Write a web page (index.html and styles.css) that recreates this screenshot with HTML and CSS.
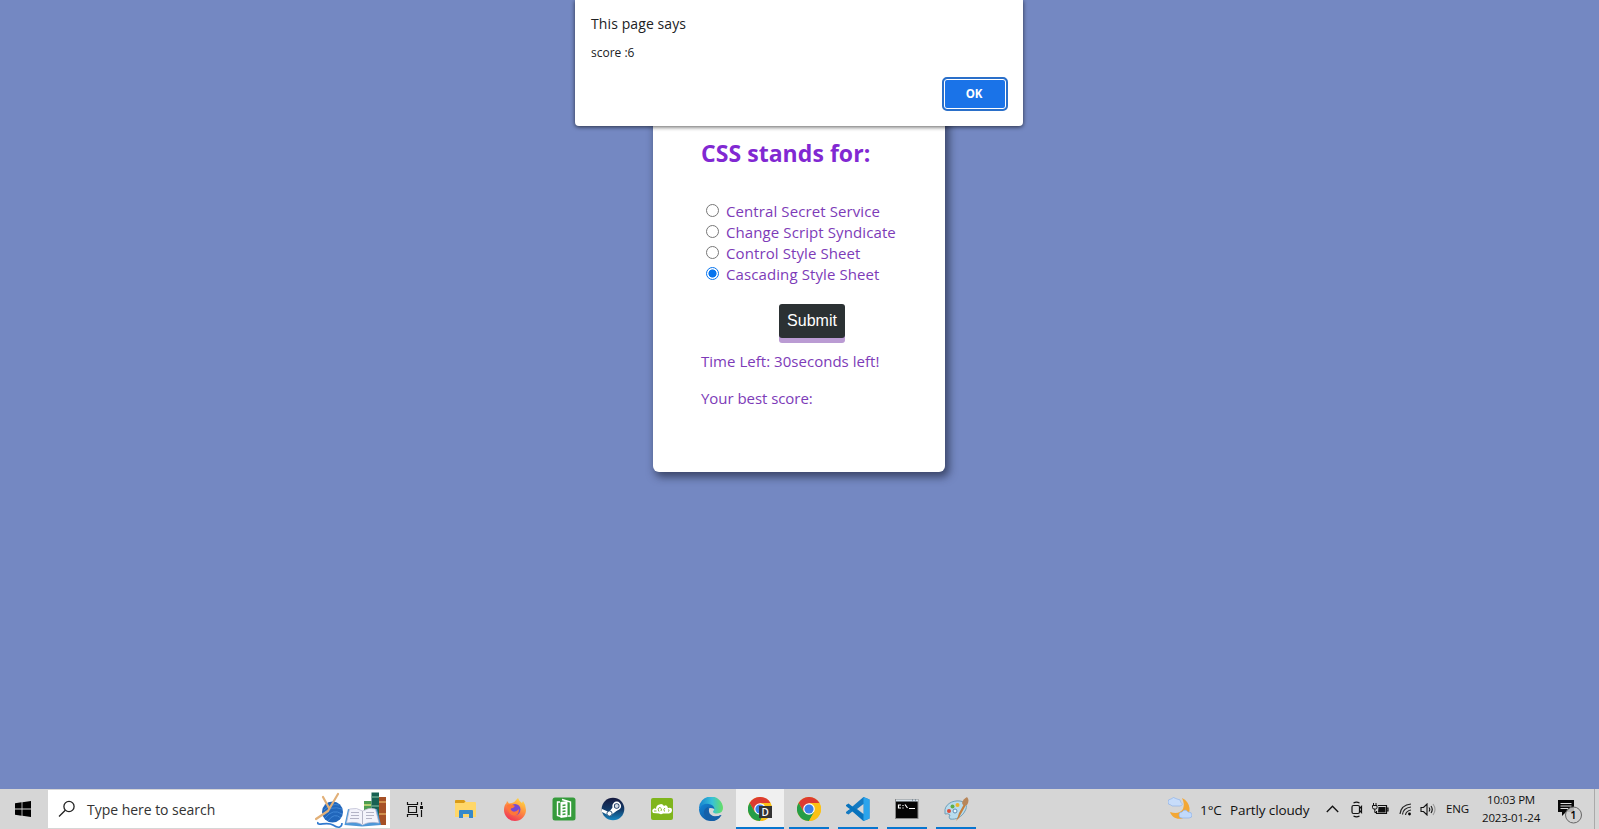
FILE: index.html
```html
<!DOCTYPE html>
<html lang="en">
<head>
<meta charset="utf-8">
<title>Quiz</title>
<link rel="stylesheet" href="styles.css">
</head>
<body>
<main class="page">
  <section class="card">
    <h2 class="question">CSS stands for:</h2>
    <div class="answers">
      <label class="answer"><span class="radio"></span><span>Central Secret Service</span></label>
      <label class="answer"><span class="radio"></span><span>Change Script Syndicate</span></label>
      <label class="answer"><span class="radio"></span><span>Control Style Sheet</span></label>
      <label class="answer"><span class="radio checked"></span><span>Cascading Style Sheet</span></label>
    </div>
    <button class="submit">Submit</button>
    <p class="line time-left">Time Left: 30seconds left!</p>
    <p class="line best">Your best score:</p>
  </section>
</main>

<div class="dialog">
  <div class="dialog-title"><span>This page says</span></div>
  <div class="dialog-text"><span>score :6</span></div>
  <button class="ok">OK</button>
</div>

<footer class="taskbar">
  <div class="start">
    <svg width="16" height="16" viewBox="0 0 16 16"><path d="M0 2.3 6.6 1.3V7.5H0ZM7.4 1.2 16 0V7.5H7.4ZM0 8.4H6.6V14.7L0 13.7ZM7.4 8.4H16V16L7.4 14.8Z"/></svg>
  </div>
  <div class="search">
    <svg class="lens" width="18" height="18" viewBox="0 0 18 18" fill="none" stroke="#222" stroke-width="1.3"><circle cx="11" cy="6.5" r="5.1"/><path d="M7.3 10.3 1 16.5"/></svg>
    <span class="search-text">Type here to search</span>
    <svg class="doodle" width="74" height="37" viewBox="0 0 74 37">
      <path d="M3 31C1 36 12 30 18 34S27 36 27 32" fill="none" stroke="#2f79cf" stroke-width="1.6"/>
      <circle cx="17.5" cy="21" r="10.500" fill="#2166bb"/>
      <path d="M9 19Q16 12 24 14M8 23Q16 14 27 18M10 27Q18 17 27 23M13 30Q19 21 26 27" fill="none" stroke="#3f86d6" stroke-width="1"/>
      <path d="M1 28 13 20M8 6 14 17M23 3 13 20" stroke="#e2b078" stroke-width="2.2" stroke-linecap="round"/>
      <rect x="49" y="10" width="7.500" height="14" fill="#4d9d50"/><path d="M49 14h7.500" stroke="#b5cf72" stroke-width="2"/>
      <rect x="56.500" y="1.500" width="7.500" height="25" fill="#176052"/><path d="M56.500 6h7.500M56.500 15h7.500" stroke="#66a48a" stroke-width="1.500"/>
      <rect x="64" y="6" width="7" height="28" fill="#a65026"/><path d="M64 11h7M64 23h7" stroke="#dea45b" stroke-width="1.500"/>
      <path d="M33 18 29.500 34 47 35.500 66 34 62 18 47 21Z" fill="#4d97d8"/>
      <path d="M34.500 18Q42 16 47.500 20Q54 16 60.500 18L64 32Q54 30 47.500 34Q42 30 31.500 32Z" fill="#f3f3fb" stroke="#b7b7cf" stroke-width=".7"/>
      <path d="M47.500 20V33M36 21.500h8M36 24.500h8M35 27.500h9M51 21.500h8M51 24.500h8M51 27.500h6" stroke="#b4b4c6"/>
    </svg>
  </div>
  <div class="task-view">
    <svg width="17" height="17" viewBox="0 0 17 17" fill="none" stroke="#111" stroke-width="1.200"><path d="M1.500 1V3.500H11.500V1M1.500 16V13.500H11.500V16M2.500 5.500H10.500V11.500H2.500ZM15.500 1V4M15.500 9V16"/><rect x="14" y="5" width="3" height="3" fill="#111" stroke="none"/></svg>
  </div>
  <div class="apps">
    <div class="app"><svg width="22" height="20" viewBox="0 0 22 20"><path d="M0 2a1 1 0 0 1 1-1H9L11 3H20a1 1 0 0 1 1 1V18H0Z" fill="#ffd769"/><path d="M0 1.500 1 1H9L10.500 2.500 9 4H0Z" fill="#d99b18"/><path d="M4 19V12a1 1 0 0 1 1-1H17a1 1 0 0 1 1 1V19H14V15H8V19Z" fill="#3689ca"/></svg></div>
    <div class="app"><svg width="24" height="24" viewBox="0 0 24 24"><defs><linearGradient id="ff" x1=".8" y1="0" x2=".3" y2="1"><stop offset="0" stop-color="#ffdf42"/><stop offset=".45" stop-color="#ff9340"/><stop offset="1" stop-color="#ef3158"/></linearGradient></defs><path d="M4 4 6 6.500 9 6Q12 5 14 2L15 1Q16 4 19 6L20 4Q23 8 23 13A11 11 0 0 1 1 13Q1 8 3.500 6Z" fill="url(#ff)"/><circle cx="12" cy="12.500" r="5.500" fill="#7549d5"/><path d="M4 8Q8 6 12 9L10 11Q7 11 8 13Q11 17 16 12Q16 18 11 18.500Q5 18 4 8Z" fill="#ff7639"/></svg></div>
    <div class="app"><svg width="24" height="24" viewBox="0 0 24 24"><rect x=".5" y=".5" width="23" height="23" rx="2.500" fill="#369b3c"/><path d="M8 5H5.500V18.500L9 19.500M16 19H18.500V5L10 2.500" fill="none" stroke="#fff" stroke-width="1.400"/><path d="M8.500 5 15.500 4V20L8.500 21Z" fill="#fff"/><path d="M10.500 8.500 13.500 8M10.500 11.500 13.500 11M10.500 14.500 13.500 14M10.500 17.500 13.500 17" stroke="#369b3c" stroke-width="1.300"/></svg></div>
    <div class="app"><svg width="24" height="24" viewBox="0 0 24 24"><defs><linearGradient id="st" x2="0" y2="1"><stop stop-color="#15183d"/><stop offset=".55" stop-color="#123d6b"/><stop offset="1" stop-color="#1687c3"/></linearGradient></defs><circle cx="12" cy="12" r="11.300" fill="url(#st)"/><path d="M1 12 8 15 12 10 18 12 9 19 1 15Z" fill="#fff"/><circle cx="15.700" cy="9" r="3.600" fill="#183762" stroke="#fff" stroke-width="1.600"/><circle cx="15.700" cy="9" r="2" fill="#d5dce6"/><circle cx="8.500" cy="16.500" r="2.600" fill="#fff" stroke="#31587b"/></svg></div>
    <div class="app"><svg width="24" height="24" viewBox="0 0 24 24"><rect x="1" y="1" width="22" height="22" rx="2" fill="#7fb51c"/><path d="M3 16Q1 13 4 11.500Q5 11 6 12Q6 8 9.500 7.500Q12 6 14 9Q17 7 18 11Q22 10 22 13Q22 16 19 16.500H13Q11 18 9 16.500Z" fill="#fff"/><path d="M9 14.500Q7 11 10 10.500Q12.500 11.500 11 14M18 14.500Q20 13.500 18.500 12.500M4 14H6.500M14.500 14.500Q13 12 15 11" fill="none" stroke="#7fb51c" stroke-width=".9"/></svg></div>
    <div class="app"><svg width="24" height="24" viewBox="0 0 24 24"><defs><linearGradient id="eg"><stop stop-color="#1683cf"/><stop offset=".55" stop-color="#37c1d8"/><stop offset="1" stop-color="#67df63"/></linearGradient><linearGradient id="eb" x2="1" y2="1"><stop stop-color="#1184d5"/><stop offset="1" stop-color="#114a90"/></linearGradient></defs><path d="M0 12A12 12 0 0 1 24 11Q24 16 18 16.500Q14 16.500 14 14.500Q17 11 12 8.500Q5 5 0 12Z" fill="url(#eg)"/><path d="M0 12Q3 6 10 7Q15 8 15.500 12Q9 9 9 14Q10 21 18 19.500L22.500 18Q18 24 12 24A12 12 0 0 1 0 12Z" fill="url(#eb)"/><path d="M9 10Q4 12 5 17Q7 23 13 24Q19 24 22.500 18Q18 20 14 19Q9 17 10 12Z" fill="#1460a9"/></svg></div>
    <div class="app running active"><svg width="24" height="24" viewBox="0 0 24 24"><g id="chrome"><circle cx="12" cy="12" r="12" fill="#fbc116"/><path d="M1.600 6A12 12 0 0 1 22.400 6H12L6.800 15Z" fill="#dd3b30"/><path d="M1.600 6A12 12 0 0 0 12 24L17.200 15H6.800Z" fill="#259d47"/><path d="M12 6H22.400A12 12 0 0 1 12 24L17.200 15Z" fill="#fbc116"/><circle cx="12" cy="12" r="5.800" fill="#fff"/><circle cx="12" cy="12" r="4.600" fill="#3b7fe8"/></g></svg><span class="profile">D</span></div>
    <div class="app running"><svg width="24" height="24" viewBox="0 0 24 24"><use href="#chrome"/></svg></div>
    <div class="app running"><svg width="24" height="24" viewBox="0 0 24 24"><path d="M17.500 0 23.500 2.500V21.500L17.500 24 7 14 2.500 17.500 0 16.200V15L17.500 0Z" fill="#147ac2"/><path d="M0 8 2.500 6.500 17.500 18V24L0 9Z" fill="#0873bd"/><path d="M17.500 0 23.500 2.500V21.500L17.500 24Z" fill="#2ba4ec"/><path d="M17.500 7V17L11 12Z" fill="#d6d6d6"/><path d="M0 10.500 4 12 0 14Z" fill="#d6d6d6"/></svg></div>
    <div class="app running"><svg width="24" height="20" viewBox="0 0 24 20"><rect x=".5" y=".5" width="22.500" height="19" fill="#050505" stroke="#888"/><path d="M1 1.500H23" stroke="#d7e2eb" stroke-width="2"/><path d="M17 1h1M20 1h1" stroke="#567"/><path d="M6 6H3.500V9H6M8 6V7M8 8.500V9.500M10 5.500 12.500 9M14 9.500H20" stroke="#fff" fill="none" stroke-width="1.200"/></svg></div>
    <div class="app running"><svg width="25" height="24" viewBox="0 0 25 24"><path d="M1 15C0 8 8 3 16 4C22 5 24 9 21 14C18 20 12 23 6 22Q4 20 6 18Q4 16 1 17Z" fill="#b9dced" stroke="#719fb8"/><circle cx="5" cy="14" r="2" fill="#dc4c38"/><circle cx="8.500" cy="9.500" r="2" fill="#5fae44"/><circle cx="13.500" cy="8" r="2" fill="#eab52b"/><circle cx="11" cy="14" r="2" fill="#e9f6fb" stroke="#5e8fb7"/><path d="M12 24Q14 20 15 16L20 7 22 8 17 17Q15 22 12 24Z" fill="#c4803e"/><path d="M18 6Q19 2 23 0Q26 3 23 8L19 8Z" fill="#b88659"/></svg></div>
  </div>
  <div class="tray">
    <svg class="weather" width="24" height="24" viewBox="0 0 24 24"><path d="M14 1C23 5 24 17 17 20C11 24 4 21 2 15Q11 18 15 12Q17 7 14 1Z" fill="#f3a735"/><path d="M3 8a3 3 0 0 1 0-6Q5-1 9 2Q13 2 13 5.500Q16 8 12 9H4Z" fill="#c7dcfa" stroke="#91b3e6" stroke-width=".7"/><path d="M14 21a3 3 0 0 1 0-6Q17 11 20 15Q24 15 24 18Q24 21 21 21Z" fill="#c1d9fb" stroke="#91b3e6" stroke-width=".7"/></svg>
    <span class="temp">1°C</span>
    <span class="sky">Partly cloudy</span>
    <svg class="chev" width="13" height="8" viewBox="0 0 13 8"><path d="M.8 7 6.500 1.200 12.200 7" fill="none" stroke="#111" stroke-width="1.300"/></svg>
    <svg class="meet" width="13" height="17" viewBox="0 0 13 17" fill="none" stroke="#111" stroke-width="1.200"><rect x="1" y="4.500" width="7.500" height="8" rx="1.500"/><path d="M8.500 7.500 10.500 5.500V11.500L8.500 9.500M2.500 2Q5.500 .3 8.500 2M2.500 15Q5.500 16.700 8.500 15"/></svg>
    <svg class="battery" width="17" height="12" viewBox="0 0 17 12"><path d="M6 2.500H14.500V10.500H4.500V8M14.500 5H16V8H14.500" fill="none" stroke="#111" stroke-width="1.200"/><path d="M6.500 4H13.500V9.500H6Z" fill="#111"/><path d="M1.500 0V2.500M4 0V2.500M.5 2.500H5V4.500Q5 6 3.500 6H2Q.5 6 .5 4.500ZM2.800 6V9.500H5" fill="none" stroke="#111"/></svg>
    <svg class="wifi" width="13" height="13" viewBox="0 0 13 13"><path d="M1 11Q2 2 12 1M3.500 11.500Q4 5 12 4M6.500 12Q7 8 12 7" fill="none" stroke="#222" stroke-width="1.200"/><circle cx="10.500" cy="11" r="1.400"/></svg>
    <svg class="volume" width="17" height="13" viewBox="0 0 17 13" fill="none" stroke="#111" stroke-width="1.100"><path d="M1 4.500H3.500L7 1V12L3.500 8.500H1ZM9 4.500Q10.500 6.500 9 8.500M11 3Q13.500 6.500 11 10"/><path d="M13 1Q17 6.500 13 12" stroke="#999"/></svg>
    <span class="lang">ENG</span>
    <div class="clock"><span class="time">10:03 PM</span><span class="date">2023-01-24</span></div>
    <svg class="notify" width="26" height="26" viewBox="0 0 26 26"><path d="M1 2H17V14H9L5 18V14H1Z" fill="#080808"/><path d="M3.500 5.500H14.500M3.500 8H14.500M3.500 10.500H11" stroke="#ddd"/><circle cx="16.500" cy="17" r="8" fill="#d0d0d0" fill-opacity=".85" stroke="#666" stroke-width="1"/><text class="badge" x="16.500" y="21" text-anchor="middle">1</text></svg>
  </div>
</footer>
</body>
</html>
```
FILE: styles.css
```css
* { box-sizing: border-box; }
body {
  margin: 0; width: 1599px; height: 829px; overflow: hidden;
  display: flex; flex-direction: column; position: relative;
  background: #7488c2;
  font-family: "Open Sans", "Noto Sans", sans-serif;
}
svg { display: block; flex: none; }
span { white-space: nowrap; }
.page { flex: 1; display: flex; flex-direction: column; align-items: center; padding: 90px 1px 0 0; }
.card {
  width: 292px; height: 382px; padding: 48px 0 0 48px;
  display: flex; flex-direction: column; align-items: flex-start;
  border-radius: 6px; background: #fff; color: #7d3bb8;
  box-shadow: 3px 4px 9px 1px rgba(20, 25, 45, .6);
}
.question { margin: 0; height: 31px; line-height: 31px; font-size: 23px; font-weight: 700; letter-spacing: .05px; color: #8128d2; white-space: nowrap; }
.answers { margin: 32px 0 0 5px; display: flex; flex-direction: column; }
.answer { height: 21px; line-height: 20px; display: flex; gap: 7px; font-size: 15px; letter-spacing: .1px; }
.radio { width: 13px; height: 13px; margin-top: 3px; flex: none; border: 1px solid #777; border-radius: 50%; background: #fff; }
.checked { border-color: #0875ee; background: radial-gradient(circle, #0875ee 0 3.7px, #fff 4.4px); }
.submit {
  width: 66px; height: 34px; margin: 19px 0 0 78px; padding: 0;
  border: 0; border-radius: 3px; background: #2b3133; color: #fff;
  box-shadow: 0 5px 0 #ba9bd3; font: 16px "Liberation Sans", sans-serif;
}
.line { margin: 0; height: 21px; line-height: 20px; font-size: 15px; letter-spacing: .03px; white-space: nowrap; }
.time-left { margin-top: 13px; }
.best { margin-top: 16px; letter-spacing: -.05px; }

.dialog {
  position: absolute; left: 575px; top: 0; width: 448px; height: 126px;
  padding: 13px 15px 0 16px; display: flex; flex-direction: column;
  background: #fff; border-radius: 0 0 4px 4px; color: #202124;
  box-shadow: 0 1px 4px rgba(0, 0, 0, .65);
}
.dialog-title { height: 22px; line-height: 22px; font-size: 14px; letter-spacing: .1px; }
.dialog-text { margin-top: 9px; height: 18px; line-height: 18px; font-size: 12px; letter-spacing: 0; }
.ok {
  align-self: flex-end; margin-top: 15px; width: 66px; height: 34px; padding: 0 2px 1px 0;
  border: 2px solid #2a6fc9; border-radius: 5px; background: #1a73e8; color: #fff;
  box-shadow: inset 0 0 0 1px #fff; font: 700 11.500px "Open Sans", sans-serif; letter-spacing: -.2px;
}

.taskbar { height: 40px; display: flex; background: #d6d6d6; color: #111; }
.start { width: 48px; display: flex; align-items: center; padding-left: 15px; }
.search { width: 342px; height: 38px; margin-top: 1px; padding-left: 10px; display: flex; align-items: center; background: #fff; }
.lens { margin-top: -1px; }
.search-text { width: 128px; margin-left: 11px; font-size: 14px; letter-spacing: -.03px; color: #333; }
.doodle { margin-left: 100px; }
.task-view { width: 51px; display: flex; align-items: center; padding-left: 16px; }
.apps { display: grid; grid-template-columns: repeat(11, 49.1px); }
.app { position: relative; display: flex; align-items: center; justify-content: center; height: 40px; }
.running::after { content: ""; position: absolute; left: 4px; right: 5px; bottom: 0; height: 2px; background: #0876cf; }
.active { background: #f0f0f0; width: 48px; }
.active::after { left: 0; right: 0; }
.profile { position: absolute; left: 23px; top: 17px; width: 13px; height: 12px; line-height: 12px; text-align: center; background: #333; color: #fff; font-size: 10px; font-weight: 600; }
.tray { flex: 1; display: flex; align-items: center; padding-left: 187px; background: linear-gradient(#aaa, #aaa) no-repeat right 4px top 0 / 1px 100%; }
.temp, .sky { font-size: 13.500px; letter-spacing: -.12px; padding-top: 2px; }
.temp { width: 21px; margin-left: 8px; }
.sky { width: 79px; margin-left: 9px; }
.chev { margin-left: 17px; }
.meet { margin-left: 12px; }
.battery { margin-left: 8px; margin-top: -1px; }
.wifi { margin-left: 10px; margin-top: 1px; }
.volume { margin-left: 8px; }
.lang { width: 24px; margin-left: 9px; margin-top: -1px; font-size: 11.500px; letter-spacing: -.15px; }
.clock { width: 60px; margin-left: 11px; display: flex; flex-direction: column; align-items: center; font-size: 11.500px; line-height: 18px; letter-spacing: -.2px; padding-bottom: 1px; }
.notify { margin-left: 16px; margin-top: 3px; }
.badge { font: 600 11px "Open Sans", sans-serif; }
```
